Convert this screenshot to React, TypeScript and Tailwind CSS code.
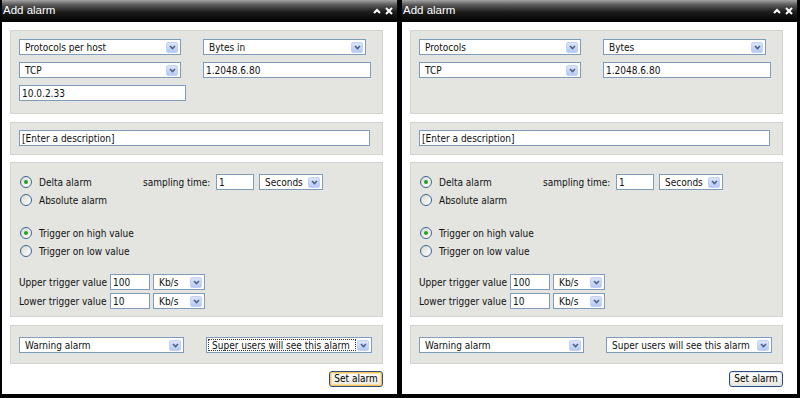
import React from "react";

const font = "font-['DejaVu_Sans_Condensed','DejaVu_Sans',sans-serif]";

function Arrow() {
  return (
    <div className="mr-[2px] flex h-[11px] w-[12px] shrink-0 items-center justify-center rounded-[2px] border border-[#c2d2f7] bg-gradient-to-b from-[#dbe5fb] to-[#b5c9f4]">
      <svg width="7" height="5" viewBox="0 0 7 5">
        <path d="M1 1 L3.5 3.5 L6 1" stroke="#4d6185" strokeWidth="1.6" fill="none" />
      </svg>
    </div>
  );
}

function Select({ text, className, focused }: { text: string; className: string; focused?: boolean }) {
  return (
    <div className={`flex h-[16px] items-center border border-[#7f9db9] bg-white ${className}`}>
      <div className="flex h-full min-w-0 flex-1 items-center p-[1px]">
        <span
          className={`flex h-full flex-1 items-center whitespace-nowrap pl-[3px] ${
            focused ? "border border-dotted border-[#333]" : "border border-transparent"
          }`}
        >
          {text}
        </span>
      </div>
      <Arrow />
    </div>
  );
}

function Input({ text, className }: { text: string; className: string }) {
  return (
    <div className={`flex h-[16px] items-center border border-[#7f9db9] bg-white pl-[2px] ${className}`}>
      {text}
    </div>
  );
}

function Radio({ checked, label }: { checked?: boolean; label: string }) {
  return (
    <div className="flex items-center gap-[7px] pl-[1px]">
      <div className="flex h-[12px] w-[12px] items-center justify-center rounded-full border border-[#3b6593] bg-gradient-to-br from-[#d8d8d2] to-white">
        {checked && <div className="h-[4px] w-[4px] rounded-full bg-[#21a121]" />}
      </div>
      <span>{label}</span>
    </div>
  );
}

function Panel({ className, children }: { className: string; children: React.ReactNode }) {
  return <div className={`border border-[#d3d4cf] bg-[#e4e5e1] ${className}`}>{children}</div>;
}

function TitleBar() {
  return (
    <div className="flex h-[22px] shrink-0 items-center justify-between bg-[linear-gradient(to_bottom,#a3a3a3_0%,#5a5a5a_22%,#1c1c1c_55%,#000_100%)] pl-[1px] pr-[4px]">
      <span className="font-['Liberation_Sans',sans-serif] text-[11.5px] text-white">Add alarm</span>
      <div className="flex items-center gap-[4px]">
        <svg width="8" height="6" viewBox="0 0 8 6">
          <path d="M1 5 L4 2 L7 5" stroke="white" strokeWidth="2" fill="none" />
        </svg>
        <svg width="8" height="8" viewBox="0 0 8 8">
          <path d="M1 1 L7 7 M7 1 L1 7" stroke="white" strokeWidth="2" fill="none" />
        </svg>
      </div>
    </div>
  );
}

function AlarmWindow({ detailed }: { detailed: boolean }) {
  return (
    <div className="flex h-[398px] w-[400px] flex-col border-b-4 border-l-2 border-r-[3px] border-black bg-white">
      <TitleBar />
      <div className={`flex flex-col pl-[8px] pr-[14px] pt-[8px] text-[10px] text-[#111] ${font}`}>
        <Panel className="flex h-[84px] px-[8px] pt-[8px]">
          <div className="flex w-[184px] flex-col gap-[7px]">
            <Select text={detailed ? "Protocols per host" : "Protocols"} className="w-[162px]" />
            <Select text="TCP" className="w-[162px]" />
            {detailed && <Input text="10.0.2.33" className="w-[167px]" />}
          </div>
          <div className="flex flex-col gap-[7px]">
            <Select text={detailed ? "Bytes in" : "Bytes"} className="w-[163px]" />
            <Input text="1.2048.6.80" className="w-[168px]" />
          </div>
        </Panel>

        <Panel className="mt-[8px] px-[8px] pb-[8px] pt-[7px]">
          <Input text="[Enter a description]" className="w-[351px]" />
        </Panel>

        <Panel className="mt-[7px] px-[8px] pb-[7px] pt-[11px]">
          <div className="flex h-[16px] items-center">
            <div className="w-[124px]">
              <Radio checked label="Delta alarm" />
            </div>
            <span className="w-[73px]">sampling time:</span>
            <Input text="1" className="w-[38px]" />
            <Select text="Seconds" className="ml-[5px] w-[64px]" />
          </div>
          <div className="mt-[2px] flex h-[16px] items-center">
            <Radio label="Absolute alarm" />
          </div>
          <div className="mt-[17px] flex h-[16px] items-center">
            <Radio checked label="Trigger on high value" />
          </div>
          <div className="mt-[2px] flex h-[16px] items-center">
            <Radio label="Trigger on low value" />
          </div>
          <div className="mt-[15px] flex items-center">
            <span className="w-[91px]">Upper trigger value</span>
            <Input text="100" className="w-[40px]" />
            <Select text="Kb/s" className="ml-[3px] w-[52px]" />
          </div>
          <div className="mt-[3px] flex items-center">
            <span className="w-[91px]">Lower trigger value</span>
            <Input text="10" className="w-[40px]" />
            <Select text="Kb/s" className="ml-[3px] w-[52px]" />
          </div>
        </Panel>

        <Panel className="mt-[8px] flex gap-[22px] px-[8px] pb-[10px] pt-[11px]">
          <Select text="Warning alarm" className="w-[165px]" />
          <Select text="Super users will see this alarm" className="w-[166px]" focused={detailed} />
        </Panel>

        <div className="mt-[7px] flex justify-end">
          <button
            className={`h-[16px] w-[54px] rounded-[3px] border border-[#2c4f7c] bg-gradient-to-b from-white to-[#e8e6dc] leading-none text-black ${
              detailed ? "shadow-[inset_0_0_0_1px_#f5c25d,inset_0_0_0_2px_#fbe0a6]" : "shadow-[inset_0_0_0_1px_#dfe6f2]"
            }`}
          >
            Set alarm
          </button>
        </div>
      </div>
    </div>
  );
}

export default function App() {
  return (
    <div className="flex h-[398px] w-[800px] bg-black">
      <AlarmWindow detailed />
      <AlarmWindow detailed={false} />
    </div>
  );
}
